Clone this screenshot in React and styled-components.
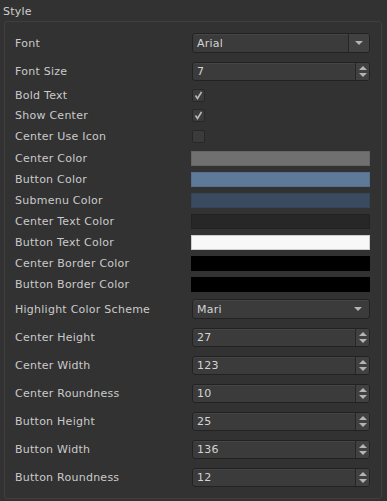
import React from "react";
import styled, { createGlobalStyle } from "styled-components";

const GlobalStyles = createGlobalStyle`
  html, body {
    margin: 0;
    padding: 0;
    background: #323232;
  }
  body {
    font-family: "DejaVu Sans", Verdana, sans-serif;
    font-size: 11px;
    letter-spacing: 0.25px;
    color: #c8c8c8;
  }
`;

const Panel = styled.div`
  width: 387px;
  height: 501px;
  background: #323232;
  box-sizing: border-box;
  padding: 0 5px 0 4px;
`;

const Title = styled.div`
  height: 21px;
  line-height: 24px;
  margin-left: -1px;
  color: #cfcfcf;
`;

const Group = styled.div`
  border: 1px solid #3f3f3f;
  border-radius: 3px;
  padding: 7px 11px 7px 10px;
  display: flex;
  flex-direction: column;
`;

const Row = styled.div`
  height: ${({ h }) => h}px;
  display: grid;
  grid-template-columns: 177px 1fr;
  align-items: center;
`;

const Label = styled.div`
  white-space: nowrap;
  color: #cacaca;
`;

const Field = styled.div`
  height: ${({ h }) => h || 18}px;
  box-sizing: border-box;
  display: flex;
  align-items: stretch;
  background: #3b3b3b;
  border: 1px solid #222;
  border-radius: 3px;
  box-shadow: inset 0 1px 0 #454545;
  color: #d4d4d4;
  overflow: hidden;
`;

const Value = styled.div`
  flex: 1;
  display: flex;
  align-items: center;
  padding-left: 4px;
`;

const ArrowBox = styled.div`
  width: ${({ w }) => w}px;
  display: flex;
  align-items: center;
  justify-content: center;
  background: ${({ split }) => (split ? "#414141" : "transparent")};
  border-left: ${({ split }) => (split ? "1px solid #262626" : "none")};
`;

const SpinBox = styled.div`
  width: 13px;
  display: flex;
  flex-direction: column;
  align-items: center;
  justify-content: center;
  gap: 3px;
  background: #414141;
  border-left: 1px solid #262626;
`;

const Tri = styled.div`
  width: 0;
  height: 0;
  border-left: 4px solid transparent;
  border-right: 4px solid transparent;
  ${({ up }) =>
    up ? "border-bottom: 4px solid #b4b4b4;" : "border-top: 4px solid #b4b4b4;"}
`;

const Check = styled.div`
  width: 13px;
  height: 13px;
  box-sizing: border-box;
  background: #3b3b3b;
  border: 1px solid #272727;
  border-radius: 2px;
  display: flex;
  align-items: center;
  justify-content: center;
`;

const Swatch = styled.div`
  height: 15px;
  margin-left: -1px;
  box-sizing: border-box;
  background: ${({ color }) => color};
  border: 1px solid ${({ edge }) => edge};
`;

const Combo = ({ value, split }) => (
  <Field h={20}>
    <Value>{value}</Value>
    <ArrowBox w={split ? 20 : 22} split={split}>
      <Tri />
    </ArrowBox>
  </Field>
);

const Spin = ({ value }) => (
  <Field h={19}>
    <Value>{value}</Value>
    <SpinBox>
      <Tri up />
      <Tri />
    </SpinBox>
  </Field>
);

const Tick = ({ on }) => (
  <Check>
    {on && (
      <svg width="9" height="9" viewBox="0 0 9 9">
        <path d="M1.5 4.5 L3.5 7.5 L7.5 1" fill="none" stroke="#b8b8b8" strokeWidth="1.6" />
      </svg>
    )}
  </Check>
);

const colors = [
  ["Center Color", "#707070", "#656565"],
  ["Button Color", "#5f7999", "#55708f"],
  ["Submenu Color", "#3a4a5f", "#34445a"],
  ["Center Text Color", "#272727", "#222"],
  ["Button Text Color", "#f8f8f8", "#cfcfcf"],
  ["Center Border Color", "#000", "#000"],
  ["Button Border Color", "#000", "#000"],
];

const spins = [
  ["Center Height", "27"],
  ["Center Width", "123"],
  ["Center Roundness", "10"],
  ["Button Height", "25"],
  ["Button Width", "136"],
  ["Button Roundness", "12"],
];

export default function App() {
  return (
    <>
      <GlobalStyles />
      <Panel>
        <Title>Style</Title>
        <Group>
          <Row h={28}>
            <Label>Font</Label>
            <Combo value="Arial" split />
          </Row>
          <Row h={28}>
            <Label>Font Size</Label>
            <Spin value="7" />
          </Row>
          <Row h={20}>
            <Label>Bold Text</Label>
            <Tick on />
          </Row>
          <Row h={20}>
            <Label>Show Center</Label>
            <Tick on />
          </Row>
          <Row h={22}>
            <Label>Center Use Icon</Label>
            <Tick />
          </Row>
          {colors.map(([name, c, e], i) => (
            <Row h={21} key={name} style={i === 0 ? { marginTop: 1 } : undefined}>
              <Label>{name}</Label>
              <Swatch color={c} edge={e} />
            </Row>
          ))}
          <Row h={28}>
            <Label>Highlight Color Scheme</Label>
            <Combo value="Mari" />
          </Row>
          {spins.map(([name, v]) => (
            <Row h={28} key={name}>
              <Label>{name}</Label>
              <Spin value={v} />
            </Row>
          ))}
        </Group>
      </Panel>
    </>
  );
}
